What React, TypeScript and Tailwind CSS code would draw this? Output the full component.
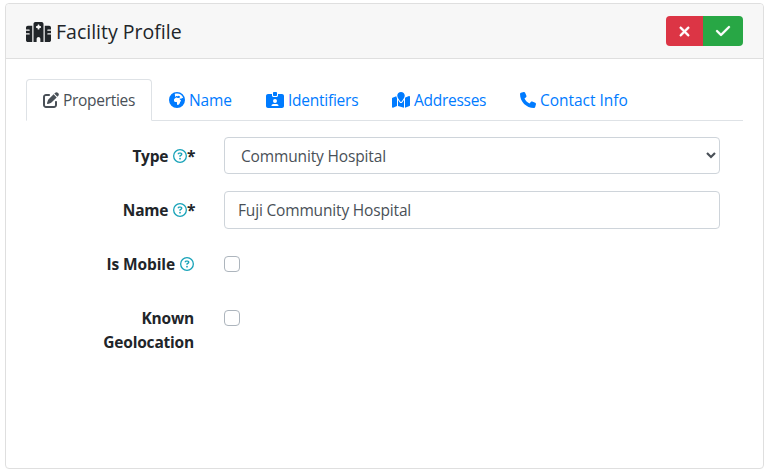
import React from "react";
import type { ReactNode } from "react";
import {
  FaHospital,
  FaEarthAfrica,
  FaIdCardClip,
  FaMapLocation,
  FaPhone,
  FaPenToSquare,
  FaXmark,
  FaCheck,
  FaRegCircleQuestion,
} from "react-icons/fa6";

function Tab({ icon, label, width, text, active = false }: { icon: ReactNode; label: string; width: string; text: string; active?: boolean }) {
  return (
    <a
      className={`-mb-px flex h-[42px] shrink-0 items-center gap-1 rounded-t border pl-4 ${width} ${
        active ? "border-[#dee2e6] border-b-white bg-white text-[#495057]" : "border-transparent text-[#007bff]"
      }`}
    >
      {icon}
      <span className={`whitespace-nowrap ${text}`}>{label}</span>
    </a>
  );
}

function Help() {
  return <FaRegCircleQuestion className="ml-[5px] h-[14px] w-[14px] text-[#17a2b8]" />;
}

function Required() {
  return <span className="w-[7px] tracking-[-2px]">*</span>;
}

export default function App() {
  return (
    <div className="h-[471px] bg-white pt-[3px] pl-[5px] font-['Open_Sans',sans-serif] text-[15.5px] leading-6 text-[#212529]">
      <section className="h-[466px] w-[759px] rounded border border-[#dfdfdf] bg-white">
        <header className="flex h-[55px] items-center justify-between rounded-t border-b border-[#dfdfdf] bg-[#f7f7f7] pr-5 pl-5">
          <h5 className="flex items-center gap-[5px] pt-0.5 text-[19.5px] font-medium">
            <FaHospital className="h-5 w-[25px]" />
            <span>Facility Profile</span>
          </h5>
          <div className="flex h-[30px] overflow-hidden rounded text-white">
            <button className="flex w-[37px] items-center justify-center bg-[#dc3545]">
              <FaXmark className="h-[15px] w-[15px]" strokeWidth={24} stroke="currentColor" />
            </button>
            <button className="flex w-10 items-center justify-center bg-[#28a745]">
              <FaCheck className="h-4 w-4" strokeWidth={10} stroke="currentColor" />
            </button>
          </div>
        </header>
        <div className="px-5 pt-5">
          <nav className="flex h-[42px] border-b border-[#dee2e6]">
            <Tab active width="w-[126px]" text="tracking-[-0.3px]" icon={<FaPenToSquare className="h-4 w-4" />} label="Properties" />
            <Tab width="w-[97px]" text="tracking-[-0.15px]" icon={<FaEarthAfrica className="h-4 w-4" />} label="Name" />
            <Tab width="w-[126px]" text="tracking-[-0.25px]" icon={<FaIdCardClip className="h-4 w-[18px]" />} label="Identifiers" />
            <Tab width="w-[128px]" text="tracking-[-0.27px]" icon={<FaMapLocation className="h-4 w-[18px]" />} label="Addresses" />
            <Tab width="w-[140px]" text="tracking-[-0.03px]" icon={<FaPhone className="h-4 w-4" />} label="Contact Info" />
          </nav>
          <form className="pt-4 text-[#495057]">
            <div className="flex h-[54px]">
              <label className="flex h-[38px] w-[168px] items-center justify-end font-bold text-[#212529]">
                <span className="tracking-[-0.3px]">Type</span><Help /><Required />
              </label>
              <div className="ml-[30px] flex h-[37px] w-[496px] items-center justify-between rounded border border-[#ced4da] pr-[3px] pl-4">
                <span className="tracking-[-0.15px]">Community Hospital</span>
                <svg viewBox="0 0 10 7" className="h-[7px] w-[10px]" fill="none" stroke="currentColor" strokeWidth="2.2">
                  <path d="M1 1L5 5L9 1" />
                </svg>
              </div>
            </div>
            <div className="flex h-[54px]">
              <label className="flex h-[38px] w-[168px] items-center justify-end font-bold text-[#212529]">
                <span className="tracking-[-0.3px]">Name</span><Help /><Required />
              </label>
              <input className="ml-[30px] h-[38px] w-[496px] rounded border border-[#ced4da] px-[13px] tracking-[-0.17px]" defaultValue="Fuji Community Hospital" />
            </div>
            <div className="flex h-[54px]">
              <label className="flex h-[38px] w-[168px] items-center justify-end font-bold text-[#212529]">
                <span className="tracking-[-0.1px]">Is Mobile</span><Help />
              </label>
              <span className="mt-[11px] ml-[30px] h-4 w-4 rounded border border-[#adb5bd]" />
            </div>
            <div className="flex">
              <label className="w-[168px] pt-[7px] text-right font-bold tracking-[-0.2px] text-[#212529]">Known<br />Geolocation</label>
              <span className="mt-[11px] ml-[30px] h-4 w-4 rounded border border-[#adb5bd]" />
            </div>
          </form>
        </div>
      </section>
    </div>
  );
}
